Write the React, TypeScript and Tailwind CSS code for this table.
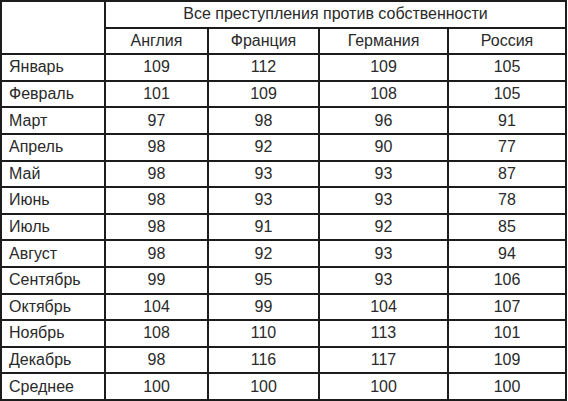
import React from 'react';

const countries = ['Англия', 'Франция', 'Германия', 'Россия'];

const rows: [string, number[]][] = [
  ['Январь', [109, 112, 109, 105]],
  ['Февраль', [101, 109, 108, 105]],
  ['Март', [97, 98, 96, 91]],
  ['Апрель', [98, 92, 90, 77]],
  ['Май', [98, 93, 93, 87]],
  ['Июнь', [98, 93, 93, 78]],
  ['Июль', [98, 91, 92, 85]],
  ['Август', [98, 92, 93, 94]],
  ['Сентябрь', [99, 95, 93, 106]],
  ['Октябрь', [104, 99, 104, 107]],
  ['Ноябрь', [108, 110, 113, 101]],
  ['Декабрь', [98, 116, 117, 109]],
  ['Среднее', [100, 100, 100, 100]],
];

export default function App() {
  return (
    <div className="w-[568px] h-[401px] bg-white">
      <div
        className="grid w-[567px] h-[401px] bg-[#1c1c1c] p-[2px] gap-[2px] text-[16px] text-[#2a2a2a]"
        style={{
          gridTemplateColumns: '102px 101px 109px 127px 116px',
          gridTemplateRows: 'repeat(15, 1fr)',
          fontFamily: '"Liberation Sans", Arial, sans-serif',
        }}
      >
        {/* header */}
        <div className="bg-white row-span-2" />
        <div className="bg-white col-span-4 flex items-center justify-center">
          Все преступления против собственности
        </div>
        {countries.map((c) => (
          <div key={c} className="bg-white flex items-center justify-center">
            {c}
          </div>
        ))}

        {/* body */}
        {rows.map(([month, vals]) => (
          <React.Fragment key={month}>
            <div className="bg-white flex items-center pl-[7px]">{month}</div>
            {vals.map((v, i) => (
              <div key={i} className="bg-white flex items-center justify-center">
                {v}
              </div>
            ))}
          </React.Fragment>
        ))}
      </div>
    </div>
  );
}
